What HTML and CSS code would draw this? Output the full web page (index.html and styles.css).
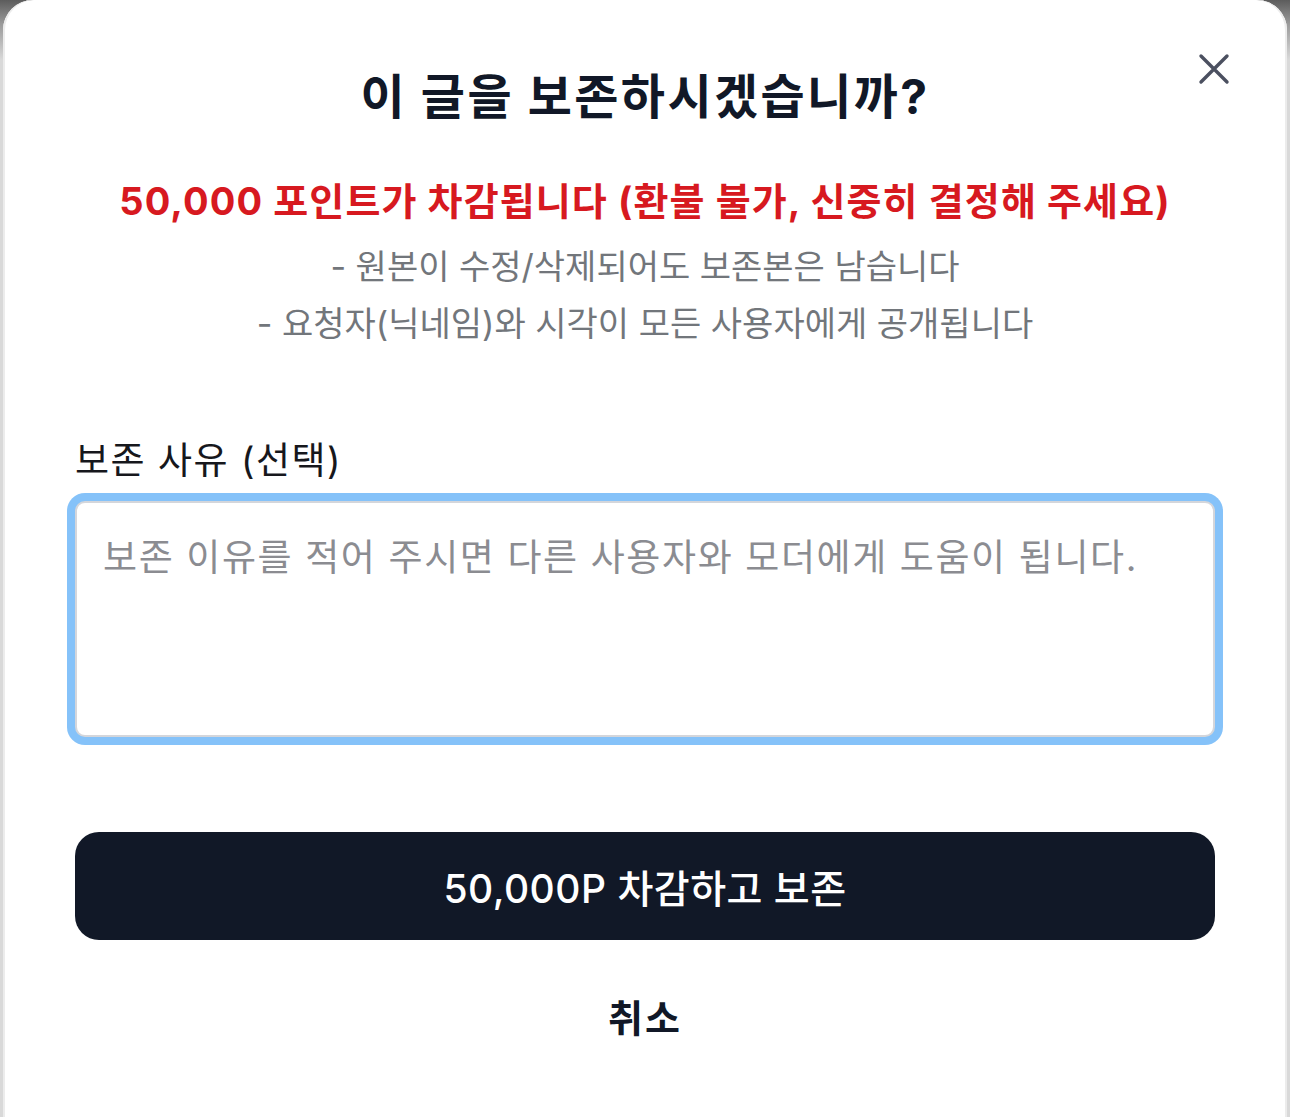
FILE: index.html
```html
<!DOCTYPE html>
<html lang="ko">
<head>
  <meta charset="UTF-8">
  <title>글 보존</title>
  <link rel="stylesheet" href="styles.css">
</head>

<body>

  <div class="sheet">
    <button class="close-btn" aria-label="닫기">
      <svg viewBox="0 0 32 32" width="32" height="32">
        <path d="M3 3 L29 29 M29 3 L3 29" stroke="#4b5060" stroke-width="3.4" stroke-linecap="round" fill="none"/>
      </svg>
    </button>

    <h2 class="sheet-title">이 글을 보존하시겠습니까?</h2>

    <p class="warn">50,000 포인트가 차감됩니다 (환불 불가, 신중히 결정해 주세요)</p>
    <ul class="notes">
      <li>- 원본이 수정/삭제되어도 보존본은 남습니다</li>
      <li>- 요청자(닉네임)와 시각이 모든 사용자에게 공개됩니다</li>
    </ul>

    <label class="field-label" for="reason">보존 사유 (선택)</label>
    <textarea id="reason" class="reason" placeholder="보존 이유를 적어 주시면 다른 사용자와 모더에게 도움이 됩니다."></textarea>

    <button class="confirm-btn">50,000P 차감하고 보존</button>
    <button class="cancel-btn">취소</button>
  </div>

</body>
</html>
```

FILE: styles.css
```css
html, body {
  height: 100%;
}

body {
  margin: 0;
  font-family: Inter, "Noto Sans CJK KR", sans-serif;
  background: linear-gradient(#5c5c5c 0, #9a9a9a 24px, #d9d9d9 60px, #d9d9d9 100%);
  overflow: hidden;
}

.sheet {
  position: relative;
  margin: 0 3px;
  min-height: 100%;
  box-sizing: border-box;
  background: #fff;
  border-radius: 30px 30px 0 0;
  box-shadow: inset 2px 0 0 #ececec, inset -2px 0 0 #ececec;
  padding: 66px 72px 0;
  display: flex;
  flex-direction: column;
  text-align: center;
}

.close-btn {
  position: absolute;
  top: 53px;
  right: 57px;
  padding: 0;
  border: none;
  background: none;
  width: 32px;
  height: 32px;
  cursor: pointer;
}

.close-btn svg {
  display: block;
}

.sheet-title {
  margin: 0;
  font-size: 48px;
  line-height: 62px;
  letter-spacing: 2.4px;
  font-weight: 700;
  color: #111827;
}

.warn {
  margin: 47px 0 0;
  font-size: 38px;
  line-height: 52px;
  letter-spacing: 1.1px;
  font-weight: 700;
  color: #d71920;
}

.notes {
  list-style: none;
  margin: 11px 0 0;
  padding: 0;
  font-size: 34px;
  line-height: 57px;
  color: #72767b;
}

.field-label {
  margin-top: 84px;
  text-align: left;
  font-size: 37px;
  line-height: 50px;
  letter-spacing: 1.5px;
  color: #16171c;
}

.reason {
  margin-top: 15px;
  height: 236px;
  box-sizing: border-box;
  padding: 27px 26px;
  border: 2px solid #d4d6db;
  border-radius: 10px;
  box-shadow: 0 0 0 8px #85c2f9;
  font-family: inherit;
  font-size: 37px;
  line-height: 56px;
  letter-spacing: 1.6px;
  color: #111;
  resize: none;
  outline: none;
}

.reason::placeholder {
  color: #8b8c91;
}

button {
  font-family: inherit;
  cursor: pointer;
}

.confirm-btn {
  margin-top: 95px;
  height: 108px;
  border: none;
  border-radius: 24px;
  background-color: #111827;
  color: #fff;
  font-size: 39px;
  letter-spacing: 0.5px;
  font-weight: 500;
}

.cancel-btn {
  margin: 53px auto 0;
  border: none;
  background: none;
  padding: 0;
  font-size: 38px;
  line-height: 50px;
  letter-spacing: 2px;
  font-weight: 700;
  color: #111827;
}
```
